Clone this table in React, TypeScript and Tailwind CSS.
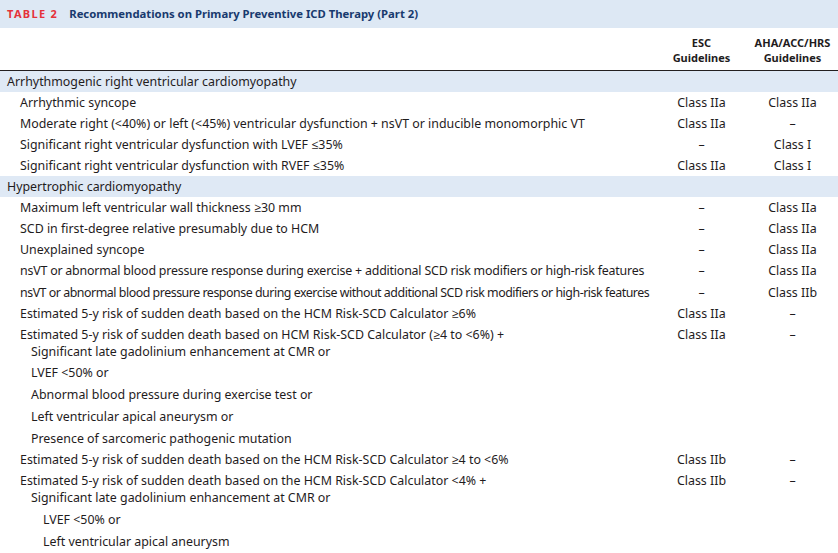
import React from 'react';

type Row =
  | { kind: 'section'; text: string }
  | {
      kind: 'row';
      text: string;
      extra?: string;
      esc?: string;
      aha?: string;
      indent?: 0 | 1 | 2;
      tight?: string;
    };

const D = '–';

const rows: Row[] = [
  { kind: 'section', text: 'Arrhythmogenic right ventricular cardiomyopathy' },
  { kind: 'row', text: 'Arrhythmic syncope', esc: 'Class IIa', aha: 'Class IIa' },
  {
    kind: 'row',
    text: 'Moderate right (<40%) or left (<45%) ventricular dysfunction + nsVT or inducible monomorphic VT',
    esc: 'Class IIa',
    aha: D,
  },
  { kind: 'row', text: 'Significant right ventricular dysfunction with LVEF ≤35%', esc: D, aha: 'Class I' },
  { kind: 'row', text: 'Significant right ventricular dysfunction with RVEF ≤35%', esc: 'Class IIa', aha: 'Class I' },
  { kind: 'section', text: 'Hypertrophic cardiomyopathy' },
  { kind: 'row', text: 'Maximum left ventricular wall thickness ≥30 mm', esc: D, aha: 'Class IIa' },
  { kind: 'row', text: 'SCD in first-degree relative presumably due to HCM', esc: D, aha: 'Class IIa' },
  { kind: 'row', text: 'Unexplained syncope', esc: D, aha: 'Class IIa' },
  {
    kind: 'row',
    text: 'nsVT or abnormal blood pressure response during exercise + additional SCD risk modifiers or high-risk features',
    esc: D,
    aha: 'Class IIa',
    tight: 'tracking-[-0.2px]',
  },
  {
    kind: 'row',
    text: 'nsVT or abnormal blood pressure response during exercise without additional SCD risk modifiers or high-risk features',
    esc: D,
    aha: 'Class IIb',
    tight: 'tracking-[-0.47px]',
  },
  {
    kind: 'row',
    text: 'Estimated 5-y risk of sudden death based on the HCM Risk-SCD Calculator ≥6%',
    esc: 'Class IIa',
    aha: D,
  },
  {
    kind: 'row',
    text: 'Estimated 5-y risk of sudden death based on HCM Risk-SCD Calculator (≥4 to <6%) +',
    extra: 'Significant late gadolinium enhancement at CMR or',
    esc: 'Class IIa',
    aha: D,
  },
  { kind: 'row', text: 'LVEF <50% or', indent: 1 },
  { kind: 'row', text: 'Abnormal blood pressure during exercise test or', indent: 1 },
  { kind: 'row', text: 'Left ventricular apical aneurysm or', indent: 1 },
  { kind: 'row', text: 'Presence of sarcomeric pathogenic mutation', indent: 1 },
  {
    kind: 'row',
    text: 'Estimated 5-y risk of sudden death based on the HCM Risk-SCD Calculator ≥4 to <6%',
    esc: 'Class IIb',
    aha: D,
  },
  {
    kind: 'row',
    text: 'Estimated 5-y risk of sudden death based on the HCM Risk-SCD Calculator <4% +',
    extra: 'Significant late gadolinium enhancement at CMR or',
    esc: 'Class IIb',
    aha: D,
  },
  { kind: 'row', text: 'LVEF <50% or', indent: 2 },
  { kind: 'row', text: 'Left ventricular apical aneurysm', indent: 2 },
];

const padLeft = ['pl-[20px]', 'pl-[31px]', 'pl-[43px]'];
const padY = ['py-[2.1px]', 'py-[2.4px]', 'py-[2.4px]'];

const App: React.FC = () => {
  return (
    <div
      className="w-[838px] h-[553px] overflow-hidden bg-white text-[#1f1c1d] text-[12.4px]"
      style={{ fontFamily: '"Noto Sans", "Open Sans", sans-serif' }}
    >
      <div className="h-[28px] bg-[#dde8f4] flex items-center pl-[7px] gap-[11px]">
        <span className="text-[#e5323b] font-bold text-[11px] tracking-[0.12em]">TABLE 2</span>
        <span className="text-[#183a6e] font-bold text-[11.3px]">
          Recommendations on Primary Preventive ICD Therapy (Part 2)
        </span>
      </div>

      <div className="grid grid-cols-[minmax(0,1fr)_91px_91px] border-b border-[#231f20] pt-[7px] pb-[5px] font-bold text-[11px] leading-[15px] text-center">
        <div />
        <div>
          ESC
          <br />
          Guidelines
        </div>
        <div>
          AHA/ACC/HRS
          <br />
          Guidelines
        </div>
      </div>

      {rows.map((r, i) =>
        r.kind === 'section' ? (
          <div key={i} className="bg-[#dfe9f5] pl-[7px] leading-[17px] py-[1.75px]">
            {r.text}
          </div>
        ) : (
          <div
            key={i}
            className={`grid grid-cols-[minmax(0,1fr)_91px_91px] leading-[17px] ${padY[r.indent ?? 0]}`}
          >
            <div className={`${padLeft[r.indent ?? 0]} whitespace-nowrap ${r.tight ?? ''}`}>
              {r.text}
              {r.extra && <div className="pl-[11px]">{r.extra}</div>}
            </div>
            <div className="text-center">{r.esc}</div>
            <div className="text-center">{r.aha}</div>
          </div>
        ),
      )}
    </div>
  );
};

export default App;
